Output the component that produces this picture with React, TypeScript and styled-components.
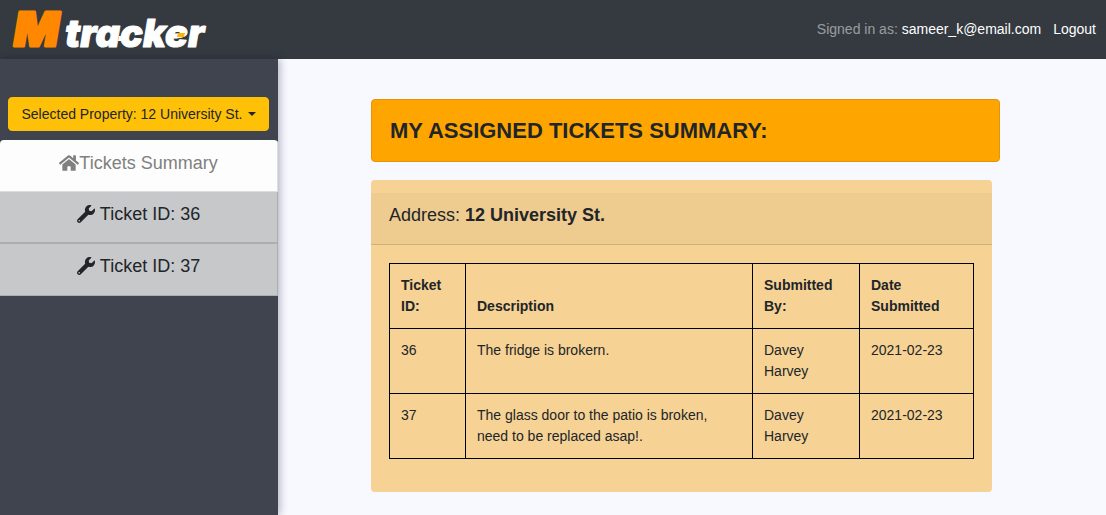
import React from "react";
import styled, { createGlobalStyle } from "styled-components";
import { FaHome, FaWrench } from "react-icons/fa";

const GlobalStyle = createGlobalStyle`
  *, *::before, *::after { box-sizing: border-box; }
  html, body, #root { min-height: 100vh; }
  body {
    margin: 0;
    background: #f8f8ff;
    color: #212529;
    font-family: "Liberation Sans", Arial, sans-serif;
    font-size: 14px;
    line-height: 21px;
  }
`;

const Page = styled.div`
  display: flex;
  flex-direction: column;
  min-height: 100vh;
`;

const Navbar = styled.header`
  display: flex;
  align-items: center;
  justify-content: space-between;
  min-height: 59px;
  padding: 0 10px 0 8px;
  background: #343a40;
`;

const Brand = styled.a`
  display: flex;
`;

const Account = styled.nav`
  display: flex;
  gap: 12px;
  color: rgba(255, 255, 255, 0.5);
`;

const NavLink = styled.a`
  color: #fff;
  text-decoration: none;
`;

const Columns = styled.div`
  display: flex;
  flex: 1;
`;

const Sidebar = styled.aside`
  display: flex;
  flex-direction: column;
  gap: 9px;
  width: 25%;
  min-width: 278px;
  padding-top: 38px;
  background: #40444e;
  box-shadow: 2px 0 8px rgba(0, 0, 40, 0.28);
`;

const PropertyButton = styled.button`
  display: flex;
  align-items: center;
  justify-content: center;
  gap: 5px;
  margin: 0 9px 0 8px;
  padding: 6px 11px;
  border: 1px solid #ffc107;
  border-radius: 4px;
  background: #ffc107;
  color: #212529;
  font: inherit;
  line-height: 20px;
  white-space: nowrap;
  cursor: pointer;

  &::after {
    content: "";
    border-top: 4px solid;
    border-right: 4px solid transparent;
    border-left: 4px solid transparent;
  }
`;

const TicketNav = styled.nav`
  display: flex;
  flex-direction: column;
  border-radius: 4px 4px 0 0;
  overflow: hidden;
`;

const TicketLink = styled.a<{ $active?: boolean }>`
  display: flex;
  align-items: center;
  justify-content: center;
  gap: ${(p) => (p.$active ? "0" : "5px")};
  padding: ${(p) => (p.$active ? "10px 0 14px" : "9px 0 14px")};
  border: 0 solid ${(p) => (p.$active ? "#dcddde" : "#abadaf")};
  border-right-width: 1px;
  border-bottom-width: ${(p) => (p.$active ? "1px" : "2px")};
  background: ${(p) => (p.$active ? "#fdfdfd" : "#c7c8ca")};
  color: ${(p) => (p.$active ? "#808080" : "#212529")};
  font-size: 18px;
  line-height: 27px;
  text-decoration: none;

  &:last-child {
    padding-bottom: 15px;
    border-bottom-width: 1px;
  }

  svg {
    margin-bottom: 2px;
  }
`;

const Main = styled.main`
  flex: 1;
  padding: 40px 106px 23px 93px;
`;

const Banner = styled.h1`
  margin: 0 0 18px;
  padding: 17px 18px;
  border: 1px solid #e39509;
  border-radius: 4px;
  background: #ffa500;
  font-size: 22px;
  line-height: 27px;
`;

const Card = styled.section`
  margin-right: 8px;
  padding-top: 13px;
  border-radius: 4px;
  background: #f6d294;
`;

const CardHeader = styled.h2`
  margin: 0;
  padding: 9px 18px 15px;
  border-bottom: 1px solid #d0b07d;
  background: #eecb8f;
  font-size: 18px;
  font-weight: 400;
  line-height: 27px;
`;

const CardBody = styled.div`
  padding: 18px 18px 33px;
`;

const TicketTable = styled.table`
  width: 100%;
  border-collapse: collapse;
  table-layout: fixed;
`;

const Column = styled.col<{ $width: number }>`
  width: ${(p) => p.$width}px;
`;

const HeadCell = styled.th`
  padding: 11px;
  border: 1px solid #000;
  text-align: left;
  vertical-align: bottom;
`;

const Cell = styled.td`
  padding: 11px;
  border: 1px solid #000;
  vertical-align: top;
`;

const tickets = [
  { id: 36, description: "The fridge is brokern.", by: "Davey Harvey", date: "2021-02-23" },
  {
    id: 37,
    description: "The glass door to the patio is broken, need to be replaced asap!.",
    by: "Davey Harvey",
    date: "2021-02-23",
  },
];

const Logo = () => (
  <svg width="212" height="58" viewBox="0 0 212 58" role="img" aria-label="Mtracker">
    <g fontFamily="Inter, sans-serif" fontWeight="900" fontStyle="italic" strokeLinejoin="round">
      <text x="6" y="45" fontSize="47" fill="#ff8800" stroke="#ff8800" strokeWidth="3">
        M
      </text>
      <text x="57" y="46" fontSize="38" fill="#fff" stroke="#fff" strokeWidth="1">
        tracker
      </text>
    </g>
    <path d="M111 35h7l-1 5h-7z" fill="#fff" />
    <path d="M170 32h7l-1 4h-7z" fill="#ffb400" />
  </svg>
);

export default function App() {
  return (
    <Page>
      <GlobalStyle />
      <Navbar>
        <Brand href="#">
          <Logo />
        </Brand>
        <Account>
          <span>
            Signed in as: <NavLink href="#">sameer_k@email.com</NavLink>
          </span>
          <NavLink href="#">Logout</NavLink>
        </Account>
      </Navbar>
      <Columns>
        <Sidebar>
          <PropertyButton type="button">Selected Property: 12 University St.</PropertyButton>
          <TicketNav>
            <TicketLink href="#" $active>
              <FaHome size={20} />
              Tickets Summary
            </TicketLink>
            {tickets.map((t) => (
              <TicketLink href="#" key={t.id}>
                <FaWrench size={18} />
                {`Ticket ID: ${t.id}`}
              </TicketLink>
            ))}
          </TicketNav>
        </Sidebar>
        <Main>
          <Banner>MY ASSIGNED TICKETS SUMMARY:</Banner>
          <Card>
            <CardHeader>
              Address: <strong>12 University St.</strong>
            </CardHeader>
            <CardBody>
              <TicketTable>
                <colgroup>
                  <Column $width={76} />
                  <Column $width={287} />
                  <Column $width={107} />
                  <Column $width={114} />
                </colgroup>
                <thead>
                  <tr>
                    <HeadCell>Ticket ID:</HeadCell>
                    <HeadCell>Description</HeadCell>
                    <HeadCell>Submitted By:</HeadCell>
                    <HeadCell>Date Submitted</HeadCell>
                  </tr>
                </thead>
                <tbody>
                  {tickets.map((t) => (
                    <tr key={t.id}>
                      <Cell>{t.id}</Cell>
                      <Cell>{t.description}</Cell>
                      <Cell>{t.by}</Cell>
                      <Cell>{t.date}</Cell>
                    </tr>
                  ))}
                </tbody>
              </TicketTable>
            </CardBody>
          </Card>
        </Main>
      </Columns>
    </Page>
  );
}
